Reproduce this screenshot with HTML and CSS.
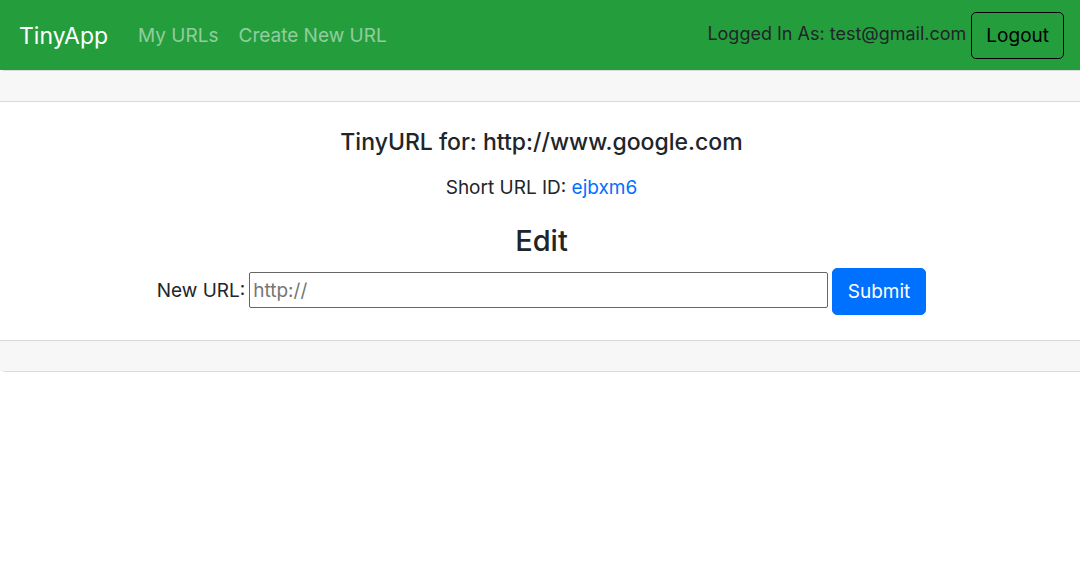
FILE: index.html
```html
<!DOCTYPE html>
<html lang="en">
<head>
<meta charset="utf-8">
<meta name="viewport" content="width=device-width, initial-scale=1">
<title>TinyApp</title>
<link rel="stylesheet" href="styles.css">
</head>
<body>
<header class="navbar">
  <a class="brand" href="#">TinyApp</a>
  <nav class="nav-links">
    <a class="nav-link" href="#">My URLs</a>
    <a class="nav-link" href="#">Create New URL</a>
  </nav>
  <form class="session">
    <span class="user">Logged In As: test@gmail.com</span>
    <button class="btn btn-outline" type="button">Logout</button>
  </form>
</header>
<main class="card">
  <div class="card-strip card-header"></div>
  <div class="card-body">
    <h1 class="title">TinyURL for: http://www.google.com</h1>
    <p class="short-id">Short URL ID: <a class="link" href="#">ejbxm6</a></p>
    <h2 class="subtitle">Edit</h2>
    <form class="edit-form">
      <label for="longURL">New URL:</label>
      <input class="url-input" id="longURL" type="text" name="longURL" placeholder="http://">
      <button class="btn btn-primary" type="button">Submit</button>
    </form>
  </div>
  <div class="card-strip card-footer"></div>
</main>
</body>
</html>
```
FILE: styles.css
```css
* {
  box-sizing: border-box;
}

body {
  margin: 0;
  background: #fff;
  color: #212529;
  font-family: Inter, "Liberation Sans", sans-serif;
  font-size: 19px;
  line-height: 29px;
}

a {
  text-decoration: none;
}

.navbar {
  display: flex;
  align-items: center;
  padding: 12px 16px 11px 19px;
  background: #249d3d;
}

.brand {
  margin-right: 20px;
  color: #fff;
  font-size: 23px;
  line-height: 36px;
}

.nav-links {
  display: flex;
  flex: 1;
}

.nav-link {
  padding: 0 10px;
  color: rgba(255, 255, 255, 0.5);
}

.session {
  display: flex;
  gap: 5px;
}

.user {
  padding-top: 7px;
  font-size: 18px;
}

.btn {
  padding: 8px 14px;
  border: 1px solid transparent;
  border-radius: 5px;
  font: inherit;
  cursor: pointer;
}

.btn-outline {
  border-color: #000;
  background: transparent;
  color: #000;
}

.btn-primary {
  padding: 8px 15px;
  border-color: #0070ff;
  background: #0070ff;
  color: #fff;
}

.card {
  border: solid #dbdbdb;
  border-width: 1px 0;
  border-radius: 5px 0 0 5px;
  overflow: hidden;
}

.card-strip {
  height: 31px;
  background: #f7f7f7;
}

.card-header {
  border-bottom: 1px solid #d8d8d8;
}

.card-footer {
  border-top: 1px solid #d8d8d8;
}

.card-body {
  padding: 25px 22px 25px 25px;
  text-align: center;
}

.title {
  margin: 0 0 15px;
  font-size: 23px;
  font-weight: 500;
  line-height: 31px;
}

.short-id {
  margin: 0 0 20px;
}

.link {
  color: #0070ff;
}

.subtitle {
  margin: 0 0 9px;
  font-size: 29px;
  font-weight: 500;
  line-height: 37px;
}

.edit-form {
  display: flex;
  justify-content: center;
  gap: 4px;
}

.edit-form label {
  padding-top: 8px;
}

.url-input {
  width: 56%;
  height: 36px;
  margin-top: 4px;
  padding: 1px 3px;
  border: 1px solid #666;
  border-radius: 2px;
  font: inherit;
}

.url-input::placeholder {
  color: #757575;
}
```
